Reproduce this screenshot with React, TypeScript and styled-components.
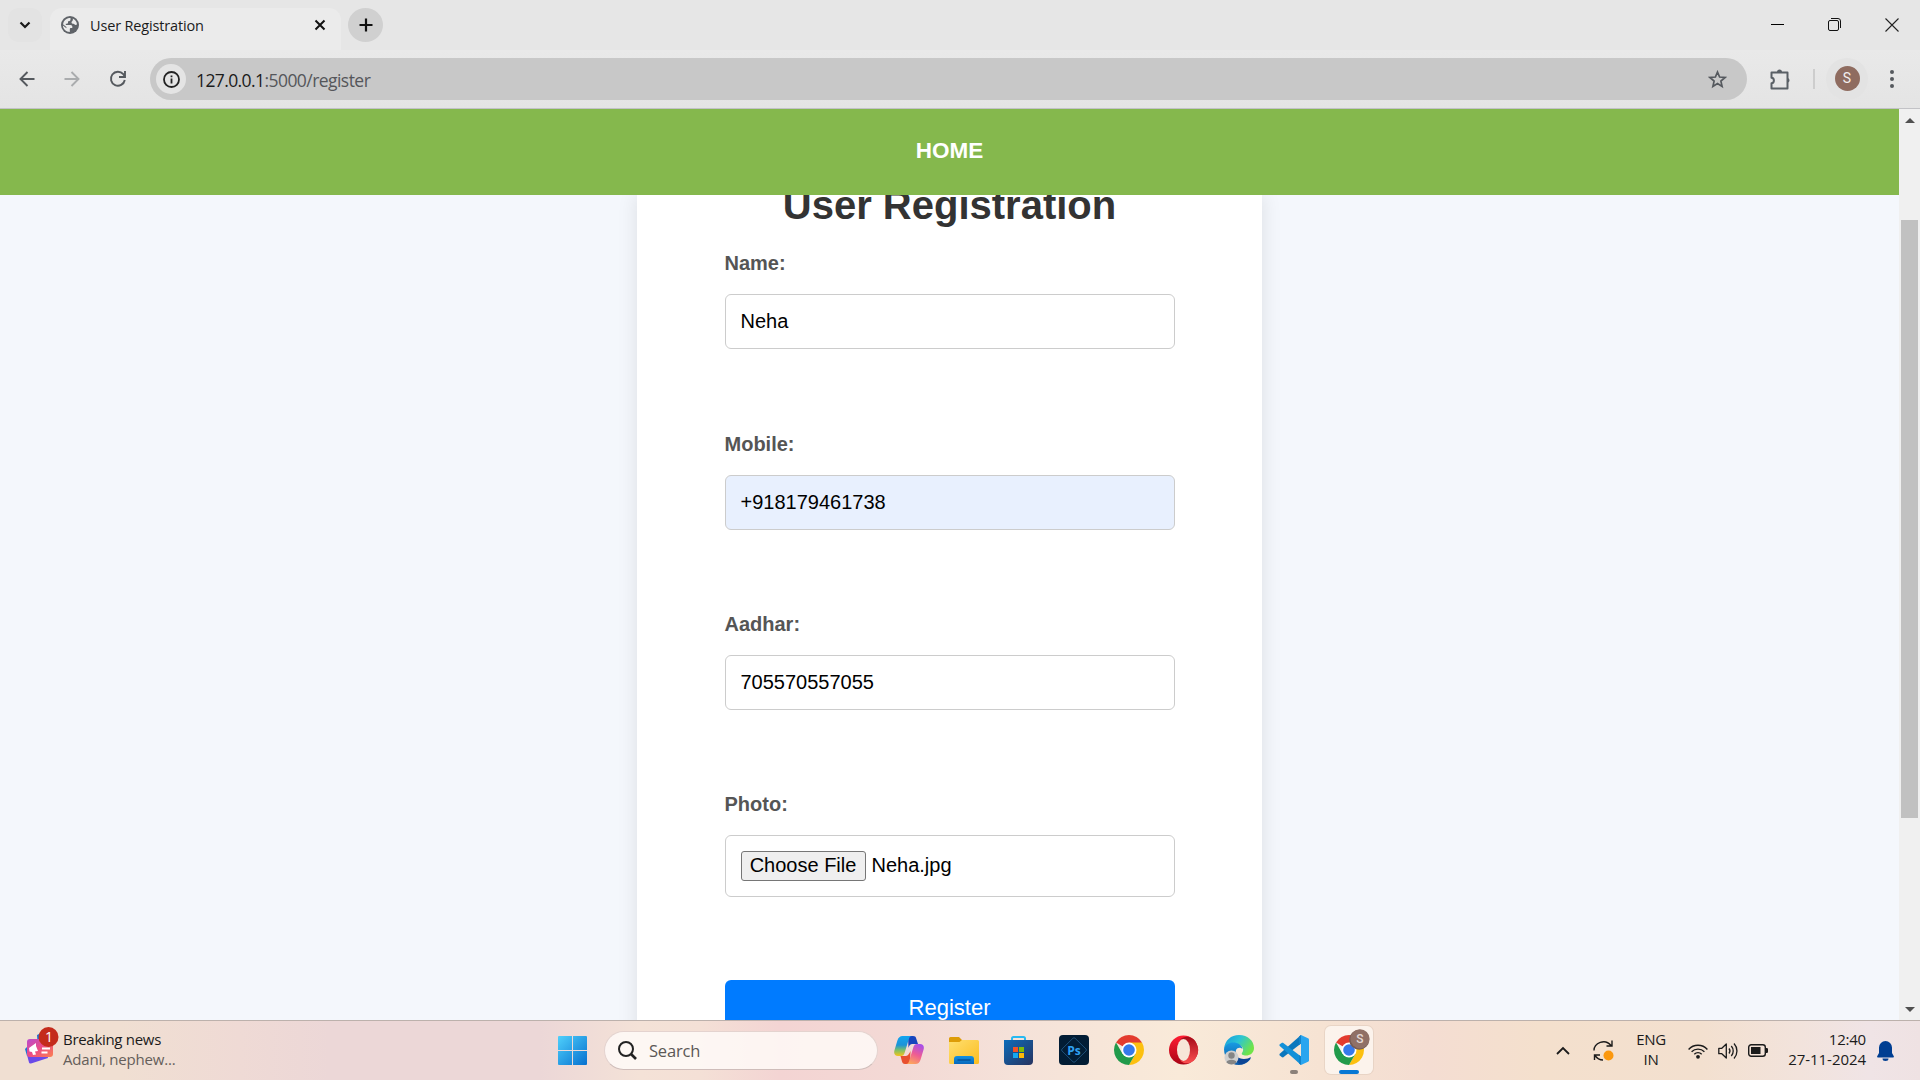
import React from 'react';
import styled, { createGlobalStyle } from 'styled-components';

const Global = createGlobalStyle`
  * { box-sizing: border-box; }
  html, body { margin: 0; padding: 0; }
  body { overflow: hidden; font-family: "Open Sans", "Noto Sans", sans-serif; }
  svg { display: block; flex: none; }
`;

const Screen = styled.div`
  width: 1920px;
  height: 1080px;
  display: grid;
  grid-template-columns: 1920px;
  grid-template-rows: 50px 58px 1px 911px 60px;
  overflow: hidden;
  background: #e6e6e6;
`;

/* ---------- text in the system face ---------- */
const Label = styled.span<{ $size: number; $track?: number; $color?: string; $line?: number }>`
  font-family: "Open Sans", "Noto Sans", sans-serif;
  font-size: ${p => p.$size}px;
  letter-spacing: ${p => p.$track ?? 0}px;
  color: ${p => p.$color ?? '#1b1b1b'};
  line-height: ${p => p.$line ?? 20}px;
  white-space: nowrap;
`;

/* ---------- browser tab strip ---------- */
const TabStrip = styled.header`
  display: flex;
  align-items: flex-start;
  background: #e6e6e6;
  overflow: hidden;
`;
const TabSearch = styled.div`
  width: 34px;
  height: 34px;
  margin: 8px 8px 0 8px;
  border-radius: 11px;
  background: #e3e3e3;
  display: grid;
  place-items: center;
`;
const Tab = styled.div`
  width: 291px;
  height: 42px;
  margin-top: 8px;
  padding: 0 13px 8px 11px;
  border-radius: 12px 12px 0 0;
  background: #ebebeb;
  display: flex;
  align-items: center;
`;
const TabTitle = styled.div`
  flex: 1;
  padding: 1px 0 0 11px;
  display: flex;
`;
const NewTab = styled.div`
  width: 35px;
  height: 34px;
  margin: 8px 0 0 7px;
  border-radius: 50%;
  background: #d0d0d0;
  display: grid;
  place-items: center;
`;
const WindowControls = styled.div`
  margin-left: auto;
  display: grid;
  grid-template-columns: 57px 57px 57px;
  height: 49px;
  align-items: center;
  justify-items: center;
`;

/* ---------- browser toolbar ---------- */
const Toolbar = styled.div`
  display: flex;
  align-items: flex-start;
  background: linear-gradient(#e9e9e9, #e4e4e4);
`;
const NavButtons = styled.div`
  width: 150px;
  display: grid;
  grid-template-columns: 54px 36px 55px;
  height: 58px;
  align-items: center;
  justify-items: center;
`;
const Omnibox = styled.div`
  width: 1597px;
  height: 42px;
  margin-top: 8px;
  padding: 0 20px 0 6px;
  border-radius: 21px;
  background: #c8c8c8;
  display: flex;
  align-items: center;
`;
const InfoChip = styled.div`
  width: 30px;
  height: 30px;
  border-radius: 50%;
  background: #e4e4e4;
  display: grid;
  place-items: center;
`;
const Address = styled.div`
  flex: 1;
  padding: 2px 0 0 10px;
  display: flex;
`;
const ToolbarEnd = styled.div`
  flex: 1;
  display: grid;
  grid-template-columns: 66px 10px 67px 1fr;
  height: 57px;
  align-items: center;
  & > :nth-child(1) { justify-self: center; }
`;
const Divider = styled.div`
  width: 2px;
  height: 20px;
  background: #cdcdcd;
`;
const Avatar = styled.div`
  width: 25px;
  height: 25px;
  border-radius: 50%;
  background: #8f6c60;
  color: #f3efee;
  font: 14px/25px Roboto, sans-serif;
  text-align: center;
`;
const AvatarHalo = styled.div`
  width: 42px;
  height: 42px;
  border-radius: 50%;
  background: #e3e3e3;
  display: grid;
  place-items: center;
  justify-self: start;
  margin-left: 3px;
`;
const Rule = styled.div`
  background: #c2c2c6;
`;

/* ---------- web page ---------- */
const Viewport = styled.main`
  display: grid;
  grid-template-columns: 1899px 21px;
  overflow: hidden;
  font-family: "Liberation Sans", Arial, sans-serif;
`;
const Page = styled.div`
  display: grid;
  grid-template-rows: 86px 825px;
  background: #f4f7fc;
  overflow: hidden;
`;
const HomeBar = styled.nav`
  background: #85b84d;
  color: #fff;
  font-weight: bold;
  font-size: 22.5px;
  display: flex;
  align-items: center;
  justify-content: center;
  padding-bottom: 3px;
`;
const PageBody = styled.div`
  display: flex;
  justify-content: center;
  overflow: hidden;
`;
const Card = styled.section`
  width: 625px;
  height: 900px;
  flex: none;
  padding: 0 87.5px;
  background: #fff;
  box-shadow: 0 0 19px rgba(0, 0, 0, 0.1);
`;
const Title = styled.h2`
  margin: -13px 0 0;
  height: 46px;
  line-height: 46px;
  font-size: 40px;
  text-align: center;
  color: #333;
`;
const Form = styled.form`
  padding-top: 24px;
  display: flex;
  flex-direction: column;
`;
const Field = styled.div<{ $h: number }>`
  height: ${p => p.$h}px;
`;
const FieldLabel = styled.label`
  display: block;
  height: 42px;
  line-height: 22px;
  font-size: 20px;
  font-weight: bold;
  color: #555;
`;
const Input = styled.input<{ $filled?: boolean }>`
  display: block;
  width: 450px;
  height: 55px;
  padding: 0 15px;
  border: 1px solid #ccc;
  border-radius: 6px;
  background: ${p => (p.$filled ? '#e8f0fe' : '#fff')};
  color: #000;
  font: 20px "Liberation Sans", Arial, sans-serif;
  outline: none;
`;
const FileBox = styled.div`
  width: 450px;
  height: 62px;
  padding: 15px;
  border: 1px solid #ccc;
  border-radius: 6px;
  display: flex;
  gap: 6px;
  font-size: 20px;
  line-height: 29px;
  color: #000;
`;
const FileButton = styled.span`
  width: 125px;
  height: 30px;
  border: 1px solid #767676;
  border-radius: 3px;
  background: #efefef;
  line-height: 27px;
  text-align: center;
`;
const Submit = styled.button`
  width: 450px;
  height: 56px;
  border: 0;
  border-radius: 6px;
  background: #007bff;
  color: #fff;
  font: 22px "Liberation Sans", Arial, sans-serif;
`;
const Scrollbar = styled.div`
  background: #f0f0f0;
  display: grid;
  grid-template-rows: 23px 1fr 21px;
  justify-items: center;
  align-items: center;
`;
const Thumb = styled.div`
  align-self: start;
  width: 17px;
  height: 598px;
  margin-top: 88px;
  background: #c1c1c1;
`;

/* ---------- taskbar ---------- */
const Taskbar = styled.footer`
  display: grid;
  grid-template-columns: 549px 831px 1fr;
  border-top: 1px solid #bcb1ac;
  background: linear-gradient(90deg, #f0dfd2 0, #f0dfd2 120px, #efdad5 240px, #ecd7d7 330px, #ecd7d7 540px, #f4e2d7 640px, #f4e0d6 700px, #f3d4d3 780px, #f3d9d5 900px, #f5e2d9 1020px, #f9ead9 1180px, #f6e3d3 1320px, #f4ddd2 1430px, #f4e0cd 1540px, #f3e0cf 1700px, #f2e3dc 1800px, #f0e4e6 1870px, #efe2e3 1920px);
`;
const News = styled.div`
  display: flex;
  padding: 6px 0 0 24px;
`;
const NewsText = styled.div`
  display: flex;
  flex-direction: column;
  padding: 2px 0 0 3px;
`;
const Apps = styled.div`
  display: flex;
  align-items: flex-start;
`;
const StartButton = styled.div`
  padding: 15px 0 0 9px;
  width: 55px;
`;
const SearchBox = styled.div`
  width: 274px;
  height: 39px;
  margin-top: 10px;
  padding-left: 13px;
  border-radius: 20px;
  border: 1px solid #e4d3cf;
  border-bottom-color: #cfbdba;
  background: rgba(255, 251, 249, 0.82);
  display: flex;
  align-items: center;
  gap: 12px;
`;
const AppRow = styled.div`
  display: flex;
  margin-left: 3px;
`;
const AppSlot = styled.div<{ $active?: boolean }>`
  width: 48px;
  height: 48px;
  margin: 5px 3px 0 4px;
  border-radius: 6px;
  background: ${p => (p.$active ? 'rgba(255,252,249,.66)' : 'transparent')};
  box-shadow: ${p => (p.$active ? '0 0 0 1px rgba(210,190,175,.35)' : 'none')};
  display: flex;
  flex-direction: column;
  align-items: center;
  padding-top: 9px;
`;
const AppIcon = styled.div`
  height: 30px;
  flex: none;
  display: grid;
  place-items: center;
`;
const Running = styled.div<{ $active?: boolean }>`
  width: ${p => (p.$active ? 20 : 8)}px;
  height: 4px;
  flex: none;
  margin-top: 5px;
  border-radius: 2px;
  background: ${p => (p.$active ? '#0878d4' : '#8b817a')};
`;
const Tray = styled.div`
  display: flex;
  align-items: center;
  justify-content: flex-end;
  padding: 0 26px 0 0;
`;
const Stack = styled.div<{ $end?: boolean; $w: number; $gap: number }>`
  width: ${p => p.$w}px;
  margin: 0 ${p => p.$gap}px 3px 0;
  display: flex;
  flex-direction: column;
  align-items: ${p => (p.$end ? 'flex-end' : 'center')};
`;
const TrayItem = styled.div<{ $gap: number }>`
  margin-right: ${p => p.$gap}px;
`;

/* ---------- drawings ---------- */
const Globe = () => (
  <svg width="18" height="18" viewBox="0 0 18 18">
    <circle cx="9" cy="9" r="9" fill="#5f6368" />
    <path d="M2 8.200C2.600 5 5 2.500 8 2.100L9.500 2v1.800c0 .9-.7 1.400-1.600 1.400H7v1.600c0 .6-.5.9-1 .9H4.800v1.200h4.700c1.200 0 1.800.8 1.800 1.700v1.500H9.800c-.7 0-1 .6-1 1.200V16C5 16 2 13 1.900 9.500l3.500 2.800v-1.400zM11.800 2.600c2.200 1 3.900 3.100 4.200 5.700-.8 1-2 .8-2.600 0-.5-.6-1.500-.5-2.300-.8-.8-.4-.8-1.800 0-2.300.8-.4.900-1.500.7-2.600z" fill="#ebebeb" />
  </svg>
);
const Chrome = ({ badge = false }: { badge?: boolean }) => (
  <svg width={badge ? 44 : 30} height="30" viewBox={badge ? '-7 0 44 30' : '0 0 30 30'} overflow="visible">
    <path d="M15 15 2.01 7.5A15 15 0 0 1 27.99 7.5z" fill="#e33b2e" />
    <path d="M15 7.5h12.99A15 15 0 0 1 15 30l6.5-11.25z" fill="#fcc010" />
    <path d="M2.01 7.5A15 15 0 0 0 15 30l6.5-11.25H8.5z" fill="#219a4a" />
    <circle cx="15" cy="15" r="7.5" fill="#fff" />
    <circle cx="15" cy="15" r="5.8" fill="#3579ea" />
    {badge && (
      <g>
        <circle cx="25.2" cy="4.8" r="10" fill="#765b54" />
        <circle cx="26" cy="3.8" r="9.6" fill="#907066" />
        <text x="26" y="8.300" textAnchor="middle" fontFamily="Roboto" fontWeight="500" fontSize="12" fill="#e4d9d5">S</text>
      </g>
    )}
  </svg>
);
const WindowsLogo = () => (
  <svg width="29" height="29" viewBox="0 0 29 29">
    <defs>
      <linearGradient id="win" x1="0" y1="0" x2="1" y2="1" gradientUnits="objectBoundingBox">
        <stop offset="0" stopColor="#4fd0fb" /><stop offset="1" stopColor="#0670cf" />
      </linearGradient>
    </defs>
    <path d="M1 0h13v14H0V1a1 1 0 0 1 1-1zM15 0h13a1 1 0 0 1 1 1v13H15zM0 15h14v14H1a1 1 0 0 1-1-1zM15 15h14v13a1 1 0 0 1-1 1H15z" fill="url(#win)" />
  </svg>
);
const Copilot = () => (
  <svg width="30" height="28" viewBox="0 0 30 28">
    <defs>
      <linearGradient id="cpA" x1="0" y1="0" x2="0" y2="1">
        <stop offset="0" stopColor="#12a5f0" /><stop offset=".45" stopColor="#1c93d8" /><stop offset=".7" stopColor="#7abf6a" /><stop offset="1" stopColor="#f6c419" />
      </linearGradient>
      <linearGradient id="cpB" x1="0.7" y1="0" x2="0.3" y2="1">
        <stop offset="0" stopColor="#a84fe8" /><stop offset=".5" stopColor="#ee5c94" /><stop offset="1" stopColor="#fda75c" />
      </linearGradient>
    </defs>
    <path d="M14 0h5c2 0 2.700.8 3.200 2.400L24 8h-5c-3 0-3.500 1-4.500 4z" fill="#1744bd" />
    <path d="M16 28h-5c-2 0-2.500-1-3-2.500L6.500 20H12c2 0 3.500-3 4.500-5z" fill="#e8502f" />
    <path d="M8.500 0H18c-2 0-2.700 1.500-3.200 3.200l-4 13C10 19 9 20 7 20H4c-3 0-4.500-2-3.600-5.500l3-10C4.300 1.500 6 0 8.500 0z" fill="url(#cpA)" />
    <path d="M21.500 28H12c2 0 2.700-1.500 3.200-3.200l4-13C20 9 21 8 23 8h3c3 0 4.500 2 3.600 5.500l-3 10c-.9 3-2.600 4.500-5.100 4.500z" fill="url(#cpB)" />
  </svg>
);
const Folder = () => (
  <svg width="30" height="27" viewBox="0 0 30 27">
    <defs>
      <linearGradient id="fold" x1="0" y1="0" x2="1" y2="1"><stop offset="0" stopColor="#ffdf70" /><stop offset="1" stopColor="#fbbd20" /></linearGradient>
      <linearGradient id="foldB" x1="0" y1="0" x2="0" y2="1"><stop offset="0" stopColor="#1391e2" /><stop offset="1" stopColor="#0868bc" /></linearGradient>
    </defs>
    <path d="M0 1.500A1.500 1.500 0 0 1 1.500 0H10l3 3v3H0z" fill="#dd9c08" />
    <path d="M0 5h10.500l2.500-2h15.500A1.500 1.500 0 0 1 30 4.500v21a1.500 1.500 0 0 1-1.500 1.500h-27A1.500 1.500 0 0 1 0 25.500z" fill="url(#fold)" />
    <path d="M5 27v-5a3 3 0 0 1 3-3h14a3 3 0 0 1 3 3v5z" fill="url(#foldB)" />
    <path d="M8.500 23h13" stroke="#064c91" strokeWidth="1.300" />
  </svg>
);
const Store = () => (
  <svg width="30" height="30" viewBox="0 0 30 30">
    <defs><linearGradient id="store" x1="0" y1="0" x2="1" y2="1"><stop offset="0" stopColor="#0c6cba" /><stop offset="1" stopColor="#27335f" /></linearGradient></defs>
    <path d="M8 6V3.500A1.500 1.500 0 0 1 9.500 2h10A1.500 1.500 0 0 1 21 3.500V6" fill="none" stroke="#27b9f1" strokeWidth="2" />
    <path d="M0 5h29v21a4 4 0 0 1-4 4H4a4 4 0 0 1-4-4z" fill="url(#store)" />
    <path d="M9 12h5v5H9z" fill="#f35325" /><path d="M15 12h5v5h-5z" fill="#81bc06" />
    <path d="M9 18h5v5H9z" fill="#16a8f0" /><path d="M15 18h5v5h-5z" fill="#ffba08" />
  </svg>
);
const Photoshop = () => (
  <svg width="30" height="30" viewBox="0 0 30 30">
    <rect width="30" height="30" rx="4" fill="#021d35" />
    <path d="M14 3.200a1.500 1.500 0 0 1 2 0L27 14a1.500 1.500 0 0 1 0 2L16 26.800a1.500 1.500 0 0 1-2 0L3 16a1.500 1.500 0 0 1 0-2z" fill="none" stroke="#1d4f78" />
    <text x="15" y="19.500" textAnchor="middle" fontFamily="Open Sans" fontWeight="700" fontSize="12" fill="#2fa0f0">Ps</text>
  </svg>
);
const Opera = () => (
  <svg width="30" height="30" viewBox="0 0 30 30">
    <defs>
      <linearGradient id="op" x1="0" y1="0" x2="0" y2="1"><stop offset="0" stopColor="#ff1d33" /><stop offset="1" stopColor="#a90415" /></linearGradient>
      <linearGradient id="opR" x1="0" y1="0" x2="0" y2="1"><stop offset="0" stopColor="#a50a18" /><stop offset="1" stopColor="#fb4f50" /></linearGradient>
    </defs>
    <circle cx="14.500" cy="15" r="14.500" fill="url(#op)" />
    <path d="M11 4.500C17-1 25 2.500 27 7.500a14.500 14.500 0 0 1 0 15C25 27.500 17 31 11 25.500c12 2 12-23 0-21z" fill="url(#opR)" />
    <ellipse cx="14.500" cy="15" rx="6.500" ry="11" fill="#f7e6d8" />
  </svg>
);
const Edge = () => (
  <svg width="30" height="30" viewBox="0 0 30 30">
    <defs>
      <linearGradient id="edA" x1="0" y1="0" x2="1" y2=".5"><stop offset="0" stopColor="#1598df" /><stop offset=".5" stopColor="#2cc4d4" /><stop offset="1" stopColor="#70e448" /></linearGradient>
      <linearGradient id="edB" x1="0" y1="0" x2="0" y2="1"><stop offset="0" stopColor="#199be2" /><stop offset="1" stopColor="#0b57a6" /></linearGradient>
    </defs>
    <path d="M0 14C1 5 7 0 15 0c9 0 15 6 15 13 0 5-4 7.500-8 7.500-3 0-5-1-4-2.500 3-4 0-8-5-9C7 8 2 10 0 14z" fill="url(#edA)" />
    <path d="M0 14c1-4 5-6.500 9-6.500 5 0 9 2.500 9.500 6.500-1-1.500-5-2.500-6.500 1-2 5 2 10 8 10 3 0 5-1 7-2-2 4-7 7-12 7C6 30 0 23 0 14z" fill="url(#edB)" />
    <path d="M12 15c-2 5 2 9 8 9 3 0 5-1 7-2-1.500 3.500-5 6.500-10 7.500C12 28 9 20 12 15z" fill="#0c4595" />
    <circle cx="7.500" cy="22.500" r="7" fill="#cfcfcf" />
    <circle cx="7.500" cy="20.500" r="3.200" fill="#858585" />
    <path d="M2.500 27.400c0-3.400 10-3.400 10 0a7 7 0 0 1-10 0z" fill="#858585" />
  </svg>
);
const VsCode = () => (
  <svg width="30" height="30" viewBox="0 0 30 30">
    <path d="M22 0v8.500L4 22.400 3 22.300.5 20.300V19z" fill="#0b77bd" />
    <path d="M.5 10.800V9.600L3 7.700h1L22 21.500V30z" fill="#1390d8" />
    <path d="m22 0 7 3.200c.6.300 1 .8 1 1.500v20.600c0 .7-.4 1.200-1 1.500L22 30z" fill="#29a5ef" />
    <path d="M20 1.500 22 0v8.500l-2 1.500zM20 20l2 1.500V30l-2-1.500z" fill="#1183ca" />
  </svg>
);
const NewsIcon = () => (
  <svg width="36" height="38" viewBox="0 0 36 38">
    <defs><linearGradient id="news" x1="0" y1="0" x2="1" y2="1"><stop offset="0" stopColor="#b84bd0" /><stop offset=".5" stopColor="#ed4c84" /><stop offset="1" stopColor="#fb8050" /></linearGradient></defs>
    <path d="m13 8 6-3 5 12-10 5zM1 22l2-2 4 8-4 1z" fill="#1c73d6" />
    <path d="m3 28 20-3 1 6-17 5.500c-1 .300-1.700 0-2-1z" fill="#6a4ae8" />
    <rect x="3" y="12" width="26" height="18" rx="3" fill="url(#news)" />
    <path d="m5 21 7-5v3l2 5-3 .5 1 3-3 .5-1-3-2.500-.5z" fill="#fff" />
    <path d="M18 21.500h8M17.500 25.500h6" stroke="#fff" strokeWidth="1.800" />
    <circle cx="24.500" cy="10" r="10" fill="#c42b1c" />
    <text x="25" y="15" textAnchor="middle" fontFamily="Open Sans" fontSize="14" fill="#fff">1</text>
  </svg>
);
const Bell = () => (
  <svg width="17" height="20" viewBox="0 0 17 20">
    <path d="M8.500 0a6.500 6.500 0 0 1 6.500 6.500V12l1.800 3.300c.3.600 0 1.200-.7 1.200H.9c-.7 0-1-.6-.7-1.200L2 12V6.500A6.500 6.500 0 0 1 8.500 0zM5.500 17.500h6a3 2.500 0 0 1-6 0z" fill="#003e92" />
  </svg>
);

const fields = [
  { label: 'Name:', value: 'Neha', h: 181 },
  { label: 'Mobile:', value: '+918179461738', h: 180, filled: true },
  { label: 'Aadhar:', value: '705570557055', h: 180 },
];

const pinned = [Copilot, Folder, Store, Photoshop, Chrome, Opera, Edge];

const Browser = () => (
  <>
    <TabStrip>
      <TabSearch>
        <svg width="12" height="8" viewBox="0 0 12 8"><path d="m1.500 1.500 4.500 4.500 4.500-4.500" fill="none" stroke="#1a1a1a" strokeWidth="2.200" /></svg>
      </TabSearch>
      <Tab>
        <Globe />
        <TabTitle><Label $size={14.5} $track={-0.16}>User Registration</Label></TabTitle>
        <svg width="16" height="12" viewBox="0 0 16 12"><path d="m3.500 1.500 9 9m0-9-9 9" stroke="#111" strokeWidth="2" /></svg>
      </Tab>
      <NewTab>
        <svg width="14" height="14" viewBox="0 0 14 14"><path d="M7 .5v13M.5 7h13" stroke="#111" strokeWidth="2.200" /></svg>
      </NewTab>
      <WindowControls>
        <svg width="13" height="13" viewBox="0 0 13 13"><path d="M0 6.500h13" stroke="#000" /></svg>
        <svg width="13" height="13" viewBox="0 0 13 13" fill="none">
          <path d="M3 .5h7A2.500 2.500 0 0 1 12.500 3v7" stroke="#111" />
          <rect x=".5" y="2.500" width="10" height="10" rx="1.500" stroke="#111" />
        </svg>
        <svg width="14" height="14" viewBox="0 0 14 14"><path d="m.5.5 13 13m0-13-13 13" stroke="#222" strokeWidth="1.100" /></svg>
      </WindowControls>
    </TabStrip>
    <Toolbar>
      <NavButtons>
        <svg width="16" height="16" viewBox="0 0 16 16" fill="none" stroke="#55595e" strokeWidth="1.900"><path d="M15.500 8H2M8.500 1 1.500 8l7 7" /></svg>
        <svg width="16" height="16" viewBox="0 0 16 16" fill="none" stroke="#aaacae" strokeWidth="1.900"><path d="M.5 8H14M7.500 1l7 7-7 7" /></svg>
        <svg width="18" height="18" viewBox="0 0 18 18" fill="none" stroke="#55595e" strokeWidth="1.900"><path d="M15.800 10A7 7 0 1 1 14.300 4.200L15.500 6M16 1v6h-6" /></svg>
      </NavButtons>
      <Omnibox>
        <InfoChip>
          <svg width="17" height="17" viewBox="0 0 17 17" fill="none" stroke="#222">
            <circle cx="8.500" cy="8.500" r="7.500" strokeWidth="1.800" /><path d="M8.500 7.500v5M8.500 4.400v1.900" strokeWidth="1.800" />
          </svg>
        </InfoChip>
        <Address>
          <Label $size={17.5} $track={-0.6}>127.0.0.1</Label>
          <Label $size={17.5} $track={-0.55} $color="#55565a">:5000/register</Label>
        </Address>
        <svg width="19" height="19" viewBox="0 0 19 19" fill="none" stroke="#55595e" strokeWidth="1.700">
          <path d="m9.500 2 2.100 5 5.400.5-4.100 3.600 1.200 5.300-4.600-2.800-4.600 2.800 1.200-5.300L2 7.500 7.400 7z" />
        </svg>
      </Omnibox>
      <ToolbarEnd>
        <svg width="22" height="22" viewBox="0 0 22 22" fill="none" stroke="#5a6066" strokeWidth="2">
          <path d="M2.500 4.500h16v16h-16v-5.200c3.200-.2 3.200-5.400 0-5.600z" strokeLinejoin="round" />
          <path d="M8 4a2.500 2.500 0 0 1 5 0zM19 10a2.500 2.500 0 0 1 0 4.600z" fill="#5a6066" stroke="none" />
        </svg>
        <Divider />
        <AvatarHalo><Avatar>S</Avatar></AvatarHalo>
        <svg width="4" height="18" viewBox="0 0 4 18" fill="#55595e"><circle cx="2" cy="2" r="2" /><circle cx="2" cy="9" r="2" /><circle cx="2" cy="16" r="2" /></svg>
      </ToolbarEnd>
    </Toolbar>
    <Rule />
  </>
);

const Registration = () => (
  <Viewport>
    <Page>
      <HomeBar>HOME</HomeBar>
      <PageBody>
        <Card>
          <Title>User Registration</Title>
          <Form>
            {fields.map(f => (
              <Field key={f.label} $h={f.h}>
                <FieldLabel>{f.label}</FieldLabel>
                <Input $filled={f.filled} defaultValue={f.value} />
              </Field>
            ))}
            <Field $h={187}>
              <FieldLabel>Photo:</FieldLabel>
              <FileBox><FileButton>Choose File</FileButton>Neha.jpg</FileBox>
            </Field>
            <Submit type="button">Register</Submit>
          </Form>
        </Card>
      </PageBody>
    </Page>
    <Scrollbar>
      <svg width="10" height="5" viewBox="0 0 10 5"><path d="M0 5 5 0l5 5z" fill="#505050" /></svg>
      <Thumb />
      <svg width="10" height="5" viewBox="0 0 10 5"><path d="m0 0 5 5 5-5z" fill="#505050" /></svg>
    </Scrollbar>
  </Viewport>
);

const Bar = () => (
  <Taskbar>
    <News>
      <NewsIcon />
      <NewsText>
        <Label $size={15} $track={-0.3}>Breaking news</Label>
        <Label $size={15} $track={-0.2} $color="#655e5a">Adani, nephew...</Label>
      </NewsText>
    </News>
    <Apps>
      <StartButton><WindowsLogo /></StartButton>
      <SearchBox>
        <svg width="19" height="19" viewBox="0 0 19 19" fill="none" stroke="#222"><circle cx="8" cy="8" r="7" strokeWidth="2" /><path d="m13 13 5 5" strokeWidth="2.600" /></svg>
        <Label $size={16.5} $track={-0.2} $color="#5c5856">Search</Label>
      </SearchBox>
      <AppRow>
        {pinned.map((Icon, i) => (
          <AppSlot key={i}><AppIcon><Icon /></AppIcon></AppSlot>
        ))}
        <AppSlot><AppIcon><VsCode /></AppIcon><Running /></AppSlot>
        <AppSlot $active><AppIcon><Chrome badge /></AppIcon><Running $active /></AppSlot>
      </AppRow>
    </Apps>
    <Tray>
      <TrayItem $gap={23}>
        <svg width="14" height="9" viewBox="0 0 14 9"><path d="m1 8 6-6 6 6" fill="none" stroke="#1b1b1b" strokeWidth="1.800" /></svg>
      </TrayItem>
      <TrayItem $gap={21}>
        <svg width="21" height="21" viewBox="0 0 21 21" fill="none" stroke="#1b1b1b" strokeWidth="1.400">
          <path d="M1 10.500C1 3 12 -2 18 5.500M19 .5v5.500h-5.500M10 20c-3 0-6-1.500-8-4.500M1.500 20v-5h5.500" />
          <circle cx="15.500" cy="15.500" r="5" fill="#fb980e" stroke="none" />
        </svg>
      </TrayItem>
      <Stack $w={32} $gap={21}>
        <Label $size={15} $track={-0.3}>ENG</Label>
        <Label $size={15} $track={-0.3}>IN</Label>
      </Stack>
      <TrayItem $gap={10}>
        <svg width="20" height="16" viewBox="0 0 20 16" fill="none" stroke="#1b1b1b" strokeWidth="1.400">
          <path d="M.6 6.500a12.500 12.500 0 0 1 18.800 0M3.600 8.800a9 9 0 0 1 12.800 0M6.300 11.200a5.500 5.500 0 0 1 7.400 0" /><circle cx="10" cy="13.800" r="1.900" fill="#1b1b1b" stroke="none" />
        </svg>
      </TrayItem>
      <TrayItem $gap={10}>
        <svg width="20" height="18" viewBox="0 0 20 18" fill="none" stroke="#1b1b1b" strokeWidth="1.300">
          <path d="M.8 6.300h3L8.300 2v14L3.800 11.700h-3zM11 6.500a4 4 0 0 1 0 5M13.300 4a7.500 7.500 0 0 1 0 10M16 1.500a11 11 0 0 1 0 15" strokeLinejoin="round" />
        </svg>
      </TrayItem>
      <TrayItem $gap={20}>
        <svg width="20" height="13" viewBox="0 0 20 13">
          <rect x=".7" y=".7" width="16.600" height="11.600" rx="2.500" fill="none" stroke="#1b1b1b" strokeWidth="1.400" />
          <rect x="3" y="3" width="9.500" height="7" fill="#1b1b1b" /><path d="M18 4h.800a1.200 1.200 0 0 1 1.200 1.200v2.600A1.200 1.200 0 0 1 18.800 9H18z" fill="#1b1b1b" />
        </svg>
      </TrayItem>
      <Stack $end $w={78} $gap={11}>
        <Label $size={15} $track={-0.2}>12:40</Label>
        <Label $size={15} $track={-0.05}>27-11-2024</Label>
      </Stack>
      <Bell />
    </Tray>
  </Taskbar>
);

export default function App() {
  return (
    <Screen>
      <Global />
      <Browser />
      <Registration />
      <Bar />
    </Screen>
  );
}
